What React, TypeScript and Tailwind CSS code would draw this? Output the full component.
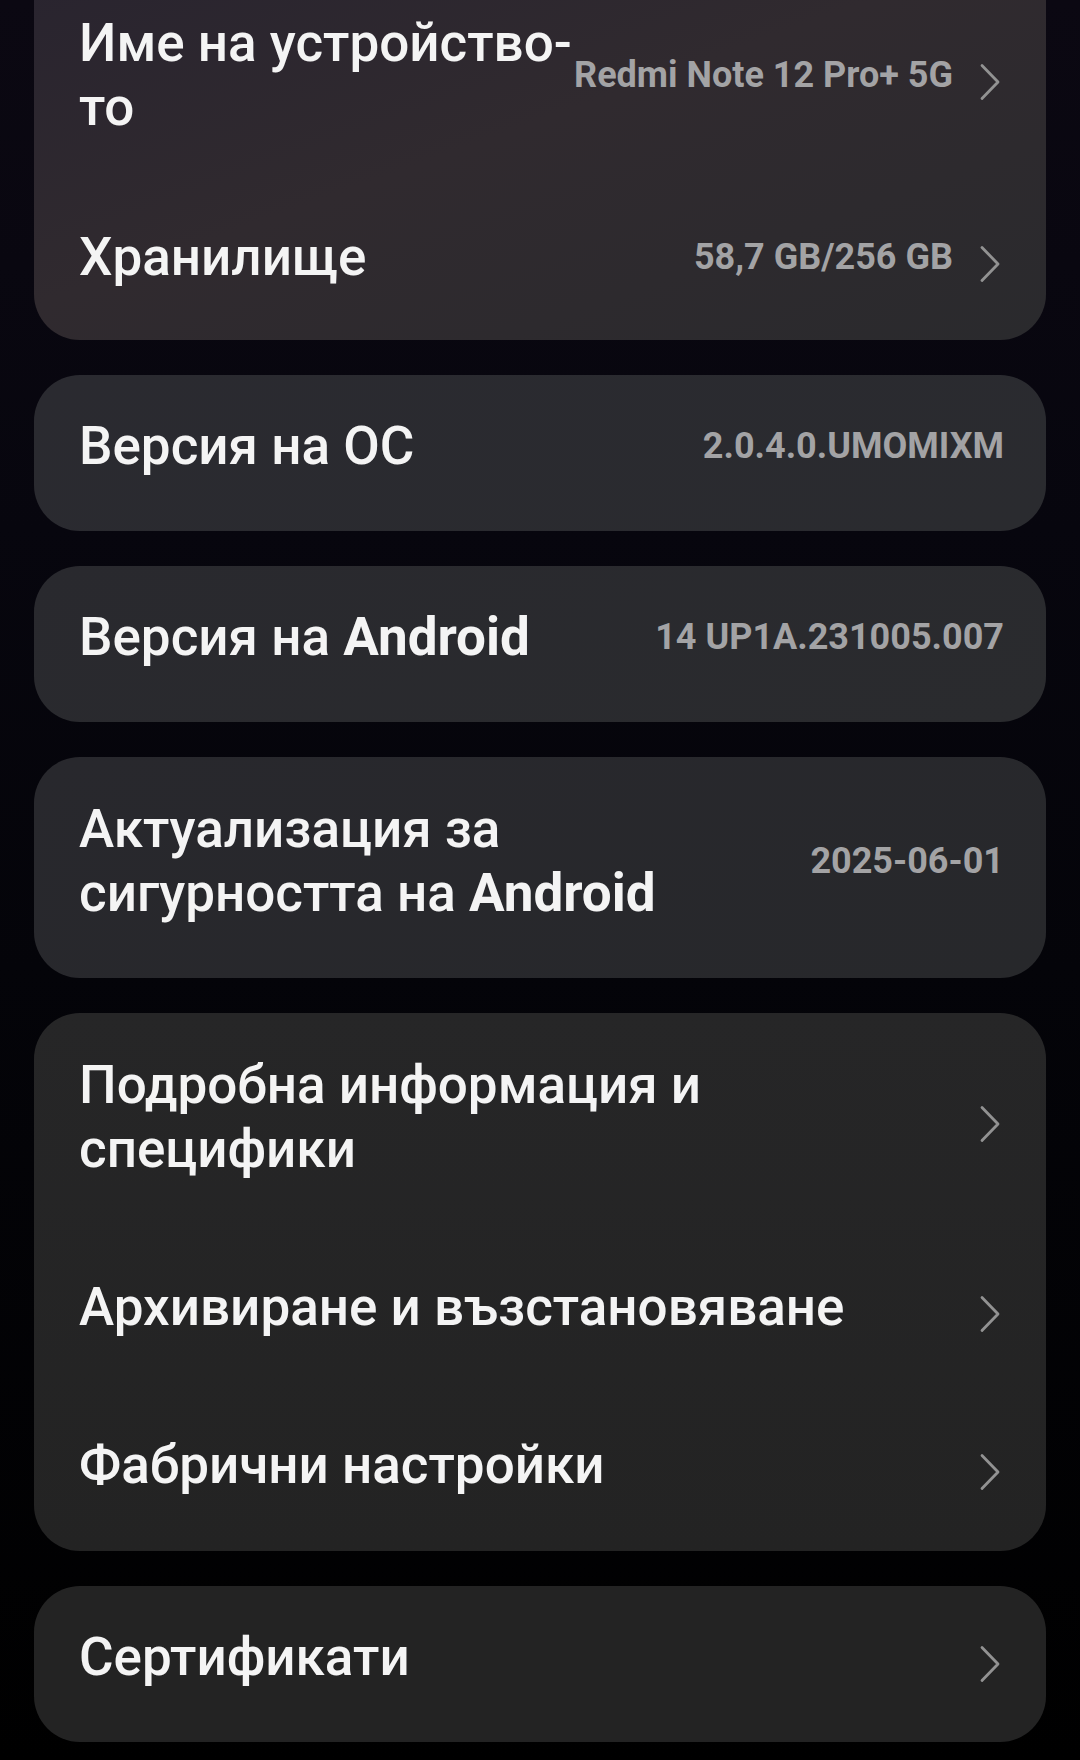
import React from 'react';

type Row = {
  title: React.ReactNode;
  value?: string;
  chevron?: boolean;
  h: string;
};

const Android = () => <span className="font-bold">Android</span>;

const cards: { rows: Row[]; bg: string; first?: boolean }[] = [
  {
    first: true,
    bg: 'bg-[linear-gradient(160deg,#29242f_0%,#302a2f_45%,#2a2a2d_100%)]',
    rows: [
      { title: <>Име на устройство-<br />то</>, value: 'Redmi Note 12 Pro+ 5G', chevron: true, h: 'h-[212px]' },
      { title: 'Хранилище', value: '58,7 GB/256 GB', chevron: true, h: 'h-[152px]' },
    ],
  },
  {
    bg: 'bg-[linear-gradient(160deg,#2a2a30_0%,#2a2b2f_100%)]',
    rows: [{ title: 'Версия на ОС', value: '2.0.4.0.UMOMIXM', h: 'h-[156px]' }],
  },
  {
    bg: 'bg-[linear-gradient(160deg,#29292e_0%,#2a2b2e_100%)]',
    rows: [{ title: <>Версия на <Android /></>, value: '14 UP1A.231005.007', h: 'h-[156px]' }],
  },
  {
    bg: 'bg-[linear-gradient(160deg,#28282d_0%,#27282b_100%)]',
    rows: [{ title: <>Актуализация за<br />сигурността на <Android /></>, value: '2025-06-01', h: 'h-[221px]' }],
  },
  {
    bg: 'bg-[linear-gradient(180deg,#262627_0%,#232323_100%)]',
    rows: [
      { title: <>Подробна информация и<br />специфики</>, chevron: true, h: 'h-[222px]' },
      { title: 'Архивиране и възстановяване', chevron: true, h: 'h-[158px]' },
      { title: 'Фабрични настройки', chevron: true, h: 'h-[158px]' },
    ],
  },
  {
    bg: 'bg-[#232323]',
    rows: [{ title: 'Сертификати', chevron: true, h: 'h-[156px]' }],
  },
];

function Chevron() {
  return (
    <svg width="22" height="38" viewBox="0 0 22 38" fill="none" className="mr-[3px] shrink-0">
      <path d="M3 2.5 L19 19 L3 35.5" stroke="#929292" strokeWidth="2.8" strokeLinecap="round" strokeLinejoin="round" />
    </svg>
  );
}

export default function App() {
  return (
    <div
      className="h-[1760px] w-[1080px] overflow-hidden bg-[linear-gradient(180deg,#0b0812_0%,#07060e_30%,#040409_55%,#000000_100%)] px-[34px]"
      style={{ fontFamily: 'Roboto, "Noto Sans", sans-serif' }}
    >
      <div className="flex flex-col gap-[35px]">
        {cards.map((card, i) => (
          <div key={i} className={`rounded-[46px] ${card.bg} ${card.first ? '-mt-[24px] rounded-t-none' : ''}`}>
            {card.rows.map((row, j) => (
              <div key={j} className={`flex items-center gap-4 pl-[45px] pr-[42px] ${row.h}`}>
                <div className="min-w-0 flex-1 whitespace-nowrap pb-[14px] text-[53px] font-medium leading-[64px] text-[#f4f4f4]">
                  {row.title}
                </div>
                <div className="flex shrink-0 items-center gap-[26px]">
                  {row.value && (
                    <span className="whitespace-nowrap pb-[14px] text-[36px] font-bold leading-[44px] text-[#a3a3a5]">
                      {row.value}
                    </span>
                  )}
                  {row.chevron && <Chevron />}
                </div>
              </div>
            ))}
          </div>
        ))}
      </div>
    </div>
  );
}
